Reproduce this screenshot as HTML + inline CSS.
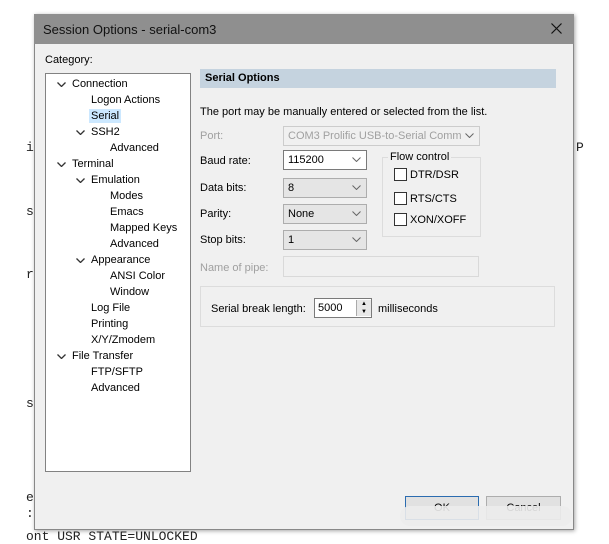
<!DOCTYPE html>
<html><head><style>
body{margin:0;width:609px;height:532px;background:#fff;position:relative;overflow:hidden;font-family:"Liberation Sans",sans-serif;font-size:11px;color:#000}
.a{position:absolute}
.dlg{left:34px;top:14px;width:538px;height:514px;background:#f0f0f0;box-shadow:1px 1px 4px rgba(0,0,0,.35);border:1px solid #888}
.title{left:34px;top:14px;width:540px;height:30px;background:#8f8f8f;font-size:13px;color:#111}
.tree{left:45px;top:73px;width:144px;height:397px;background:#fff;border:1px solid #828282}
.t{position:absolute;white-space:nowrap}
.sel{left:200px;width:90px;height:20px;border:1px solid #adadad;background:#e5e5e5;box-sizing:border-box;padding:3px 4px;white-space:nowrap;overflow:hidden}
.dd{position:absolute;right:5px;top:6px}
.cb{width:11px;height:11px;border:1px solid #333;background:#fff}
.mono{font-family:"Liberation Mono",monospace;font-size:13px;color:#222}
</style></head><body>
<svg width="0" height="0" style="position:absolute"><defs><symbol id="v" viewBox="0 0 9 5"><path d="M0.5 0.5L4.5 4.5L8.5 0.5" fill="none" stroke="#666" stroke-width="1"/></symbol><symbol id="tv" viewBox="0 0 9 5"><path d="M0.5 0.5L4.5 4.5L8.5 0.5" fill="none" stroke="#333" stroke-width="1.3"/></symbol></defs></svg>
<div class="a mono" style="left:26px;top:140px">i</div>
<div class="a mono" style="left:26px;top:204px">s</div>
<div class="a mono" style="left:26px;top:267px">r</div>
<div class="a mono" style="left:26px;top:396px">s</div>
<div class="a mono" style="left:26px;top:490px">e</div>
<div class="a mono" style="left:26px;top:506px">:</div>
<div class="a mono" style="left:26px;top:529px">ont USR STATE=UNLOCKED</div>
<div class="a mono" style="left:576px;top:140px">P</div>
<div class="a dlg"></div>
<div class="a title"><span class="t" style="left:9px;top:8px">Session Options - serial-com3</span>
<svg class="a" style="left:517px;top:9px" width="11" height="11"><path d="M0.5 0.5L10.5 10.5M10.5 0.5L0.5 10.5" stroke="#111" stroke-width="1.2"/></svg></div>
<div class="a" style="left:45px;top:54px">Category:</div>
<div class="a tree">
<svg class="a" style="left:11px;top:8px" width="9" height="5"><use href="#tv"/></svg><span class="t" style="left:26px;top:4px">Connection</span>
<span class="t" style="left:45px;top:20px">Logon Actions</span>
<span class="t" style="left:43px;top:35px;background:#cce8ff;padding:1px 2px">Serial</span>
<svg class="a" style="left:30px;top:56px" width="9" height="5"><use href="#tv"/></svg><span class="t" style="left:45px;top:52px">SSH2</span>
<span class="t" style="left:64px;top:68px">Advanced</span>
<svg class="a" style="left:11px;top:88px" width="9" height="5"><use href="#tv"/></svg><span class="t" style="left:26px;top:84px">Terminal</span>
<svg class="a" style="left:30px;top:104px" width="9" height="5"><use href="#tv"/></svg><span class="t" style="left:45px;top:100px">Emulation</span>
<span class="t" style="left:64px;top:116px">Modes</span>
<span class="t" style="left:64px;top:132px">Emacs</span>
<span class="t" style="left:64px;top:148px">Mapped Keys</span>
<span class="t" style="left:64px;top:164px">Advanced</span>
<svg class="a" style="left:30px;top:184px" width="9" height="5"><use href="#tv"/></svg><span class="t" style="left:45px;top:180px">Appearance</span>
<span class="t" style="left:64px;top:196px">ANSI Color</span>
<span class="t" style="left:64px;top:212px">Window</span>
<span class="t" style="left:45px;top:228px">Log File</span>
<span class="t" style="left:45px;top:244px">Printing</span>
<span class="t" style="left:45px;top:260px">X/Y/Zmodem</span>
<svg class="a" style="left:11px;top:280px" width="9" height="5"><use href="#tv"/></svg><span class="t" style="left:26px;top:276px">File Transfer</span>
<span class="t" style="left:45px;top:292px">FTP/SFTP</span>
<span class="t" style="left:45px;top:308px">Advanced</span>
</div>
<div class="a" style="left:200px;top:69px;width:356px;height:19px;background:#c5d3df;font-weight:bold"><span class="t" style="left:5px;top:3px">Serial Options</span></div>
<div class="a" style="left:200px;top:106px">The port may be manually entered or selected from the list.</div>
<div class="a" style="left:200px;top:130px;color:#a0a0a0">Port:</div>
<div class="a sel" style="left:283px;top:126px;width:197px;background:#f0f0f0;border-color:#ccc;color:#a0a0a0"><span style="display:block;width:176px;overflow:hidden">COM3 Prolific USB-to-Serial Comm Pc</span><svg class="dd" width="9" height="5"><use href="#v"/></svg></div>
<div class="a" style="left:200px;top:155px">Baud rate:</div>
<div class="a sel" style="left:283px;top:150px;width:84px;background:#fff;border-color:#7a7a7a">115200<svg class="dd" width="9" height="5"><use href="#v"/></svg></div>
<div class="a" style="left:200px;top:182px">Data bits:</div>
<div class="a sel" style="left:283px;top:178px;width:84px">8<svg class="dd" width="9" height="5"><use href="#v"/></svg></div>
<div class="a" style="left:200px;top:208px">Parity:</div>
<div class="a sel" style="left:283px;top:204px;width:84px">None<svg class="dd" width="9" height="5"><use href="#v"/></svg></div>
<div class="a" style="left:200px;top:234px">Stop bits:</div>
<div class="a sel" style="left:283px;top:230px;width:84px">1<svg class="dd" width="9" height="5"><use href="#v"/></svg></div>
<div class="a" style="left:382px;top:157px;width:97px;height:78px;border:1px solid #dcdcdc"></div>
<div class="a" style="left:388px;top:151px;background:#f0f0f0;padding:0 2px">Flow control</div>
<div class="a cb" style="left:394px;top:168px"></div><div class="a" style="left:410px;top:169px">DTR/DSR</div>
<div class="a cb" style="left:394px;top:192px"></div><div class="a" style="left:410px;top:193px">RTS/CTS</div>
<div class="a cb" style="left:394px;top:213px"></div><div class="a" style="left:410px;top:214px">XON/XOFF</div>
<div class="a" style="left:200px;top:262px;color:#a0a0a0">Name of pipe:</div>
<div class="a" style="left:283px;top:256px;width:196px;height:21px;border:1px solid #d9d9d9;box-sizing:border-box"></div>
<div class="a" style="left:200px;top:286px;width:355px;height:41px;border:1px solid #dcdcdc;box-sizing:border-box"></div>
<div class="a" style="left:211px;top:303px">Serial break length:</div>
<div class="a" style="left:314px;top:298px;width:58px;height:20px;background:#fff;border:1px solid #7a7a7a;box-sizing:border-box;padding:3px 3px">5000</div>
<div class="a" style="left:356px;top:300px;width:14px;height:16px;background:#e8e8e8;border-left:1px solid #aaa;font-size:6px;line-height:8px;text-align:center">▲<br>▼</div>
<div class="a" style="left:378px;top:303px">milliseconds</div>
<div class="a" style="left:405px;top:496px;width:72px;height:22px;border:1px solid #2b6cb0;background:#e1e1e1;text-align:center;line-height:22px">OK</div>
<div class="a" style="left:486px;top:496px;width:73px;height:22px;border:1px solid #adadad;background:#e1e1e1;text-align:center;line-height:22px">Cancel</div>
<div class="a" style="left:400px;top:506px;width:172px;height:20px;background:rgba(236,236,236,.9);border-radius:10px"></div>
</body></html>
